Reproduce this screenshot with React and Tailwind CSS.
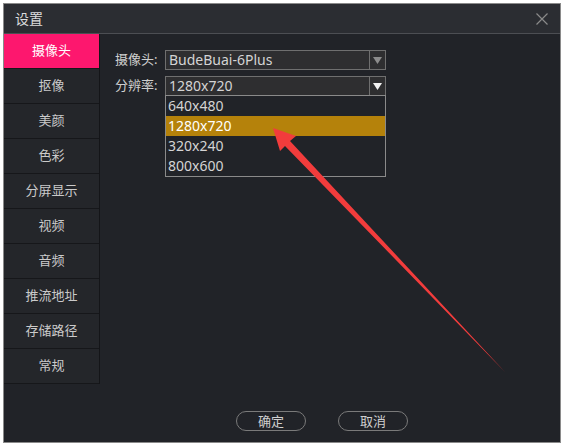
import React, { useState } from 'react';

const tabs = ['摄像头', '抠像', '美颜', '色彩', '分屏显示', '视频', '音频', '推流地址', '存储路径', '常规'];
const resolutions = ['640x480', '1280x720', '320x240', '800x600'];

const Caret = ({ active }) => (
  <svg width="9" height="7" viewBox="0 0 9 7">
    <path d="M0 0 H9 L4.5 7 Z" fill={active ? '#f2f2f2' : '#8c8c8c'} />
  </svg>
);

const Select = ({ value, active }) => (
  <div className="w-[221px] h-[20px] border border-[#6f6f6f] bg-[#2e2e30] flex">
    <div className="flex-1 pl-[3px] text-[14px] leading-[18px] text-[#d4d4d4]">{value}</div>
    <div className="w-[16px] border-l border-[#6f6f6f] flex items-center justify-center">
      <Caret active={active} />
    </div>
  </div>
);

const App = () => {
  const [tab, setTab] = useState(0); // 当前选中的标签
  const [res] = useState('1280x720');

  return (
    <div
      className="relative w-[565px] h-[447px] bg-white pt-[3px] pl-[3px] overflow-hidden"
      style={{ fontFamily: '"Noto Sans", "Noto Sans CJK SC", sans-serif' }}
    >
      <div className="w-[558px] h-[440px] border border-[#8a8a8a] bg-[#212328] flex flex-col">
        {/* 标题栏 */}
        <div className="h-[30px] flex items-center justify-between pl-[11px] pr-[12px] bg-[#2b2d32] border-b border-[#4c4e53]">
          <span className="text-[14px] text-[#dcdcdc]">设置</span>
          <svg width="12" height="12" viewBox="0 0 12 12">
            <path d="M0.5 0.5 L11.5 11.5 M11.5 0.5 L0.5 11.5" stroke="#8a8a8a" strokeWidth="1.2" />
          </svg>
        </div>

        <div className="flex flex-1">
          {/* 左侧菜单 */}
          <div className="w-[96px]">
            <div className="border-r border-[#141518]">
              {tabs.map((t, i) => (
                <div
                  key={t}
                  onClick={() => setTab(i)}
                  className={`h-[35px] flex items-center justify-center text-[13px] border-b border-[#16171a] cursor-pointer ${
                    i === tab ? 'bg-[#fd176e] text-white' : 'bg-[#24262a] text-[#cacaca]'
                  }`}
                >
                  {t}
                </div>
              ))}
            </div>
          </div>

          {/* 右侧内容 */}
          <div className="flex-1 flex flex-col pl-[15px] pt-[16px]">
            <div className="flex items-center h-[20px]">
              <span className="w-[50px] text-[13px] text-[#cfcfcf]">摄像头:</span>
              <Select value="BudeBuai-6Plus" />
            </div>
            <div className="flex items-center h-[20px] mt-[6px]">
              <span className="w-[50px] text-[13px] text-[#cfcfcf]">分辨率:</span>
              <div className="relative">
                <Select value={res} active />
                <div className="absolute left-0 top-[19px] w-[221px] border border-[#8a8a8a] bg-[#212328] z-10">
                  {resolutions.map((r) => (
                    <div
                      key={r}
                      className={`h-[20px] pl-[2px] text-[14px] leading-[20px] ${
                        r === res ? 'bg-[#b5820b] text-white' : 'text-[#d4d4d4]'
                      }`}
                    >
                      {r}
                    </div>
                  ))}
                </div>
              </div>
            </div>

            <div className="mt-auto mb-[11px] flex gap-[32px] pl-[121px]">
              <button className="w-[70px] h-[20px] rounded-full border border-[#7a7a7a] text-[13px] leading-[18px] text-[#cfcfcf]">
                确定
              </button>
              <button className="w-[70px] h-[20px] rounded-full border border-[#7a7a7a] text-[13px] leading-[18px] text-[#cfcfcf]">
                取消
              </button>
            </div>
          </div>
        </div>
      </div>

      {/* 红色箭头标注 */}
      <svg className="absolute left-0 top-0 pointer-events-none z-20" width="565" height="447" viewBox="0 0 565 447">
        <polygon
          points="273,128 296,136 290,141 505,372 285,146 280,151"
          fill="#f23c3c"
        />
      </svg>
    </div>
  );
};

export default App;
